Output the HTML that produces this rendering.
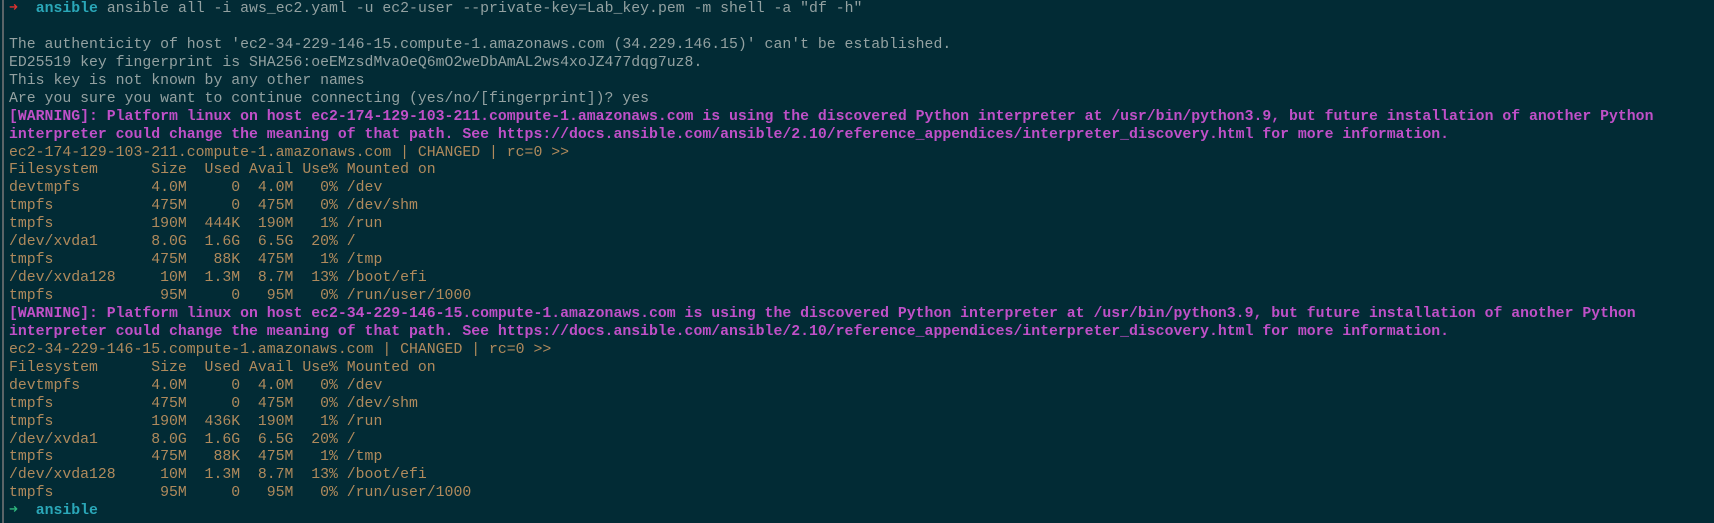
<!DOCTYPE html>
<html><head><meta charset="utf-8"><style>
html,body{margin:0;padding:0;}
body{width:1714px;height:523px;background:#022b35;overflow:hidden;position:relative;}
.bar{position:absolute;left:2px;top:0;width:2px;height:523px;background:#5a6468;}
pre{margin:0;position:absolute;left:9px;top:1px;font-family:"Liberation Mono","DejaVu Sans Mono",monospace;font-size:14.82px;line-height:17.93px;color:#93a1a1;white-space:pre;}
.r{color:#dc322f;font-weight:bold}
.g{color:#2eb67d;font-weight:bold}
.c{color:#2aa7b8;font-weight:bold}
.m{color:#c050c8;font-weight:bold}
.o{color:#b08a5c}
</style></head><body><div class="bar"></div><pre><span class="r">➜</span>  <span class="c">ansible</span> ansible all -i aws_ec2.yaml -u ec2-user --private-key=Lab_key.pem -m shell -a "df -h"

The authenticity of host 'ec2-34-229-146-15.compute-1.amazonaws.com (34.229.146.15)' can't be established.
ED25519 key fingerprint is SHA256:oeEMzsdMvaOeQ6mO2weDbAmAL2ws4xoJZ477dqg7uz8.
This key is not known by any other names
Are you sure you want to continue connecting (yes/no/[fingerprint])? yes
<span class="m">[WARNING]: Platform linux on host ec2-174-129-103-211.compute-1.amazonaws.com is using the discovered Python interpreter at /usr/bin/python3.9, but future installation of another Python
interpreter could change the meaning of that path. See https://docs.ansible.com/ansible/2.10/reference_appendices/interpreter_discovery.html for more information.</span>
<span class="o">ec2-174-129-103-211.compute-1.amazonaws.com | CHANGED | rc=0 &gt;&gt;
Filesystem      Size  Used Avail Use% Mounted on
devtmpfs        4.0M     0  4.0M   0% /dev
tmpfs           475M     0  475M   0% /dev/shm
tmpfs           190M  444K  190M   1% /run
/dev/xvda1      8.0G  1.6G  6.5G  20% /
tmpfs           475M   88K  475M   1% /tmp
/dev/xvda128     10M  1.3M  8.7M  13% /boot/efi
tmpfs            95M     0   95M   0% /run/user/1000</span>
<span class="m">[WARNING]: Platform linux on host ec2-34-229-146-15.compute-1.amazonaws.com is using the discovered Python interpreter at /usr/bin/python3.9, but future installation of another Python
interpreter could change the meaning of that path. See https://docs.ansible.com/ansible/2.10/reference_appendices/interpreter_discovery.html for more information.</span>
<span class="o">ec2-34-229-146-15.compute-1.amazonaws.com | CHANGED | rc=0 &gt;&gt;
Filesystem      Size  Used Avail Use% Mounted on
devtmpfs        4.0M     0  4.0M   0% /dev
tmpfs           475M     0  475M   0% /dev/shm
tmpfs           190M  436K  190M   1% /run
/dev/xvda1      8.0G  1.6G  6.5G  20% /
tmpfs           475M   88K  475M   1% /tmp
/dev/xvda128     10M  1.3M  8.7M  13% /boot/efi
tmpfs            95M     0   95M   0% /run/user/1000</span>
<span class="g">➜</span>  <span class="c">ansible</span></pre></body></html>
